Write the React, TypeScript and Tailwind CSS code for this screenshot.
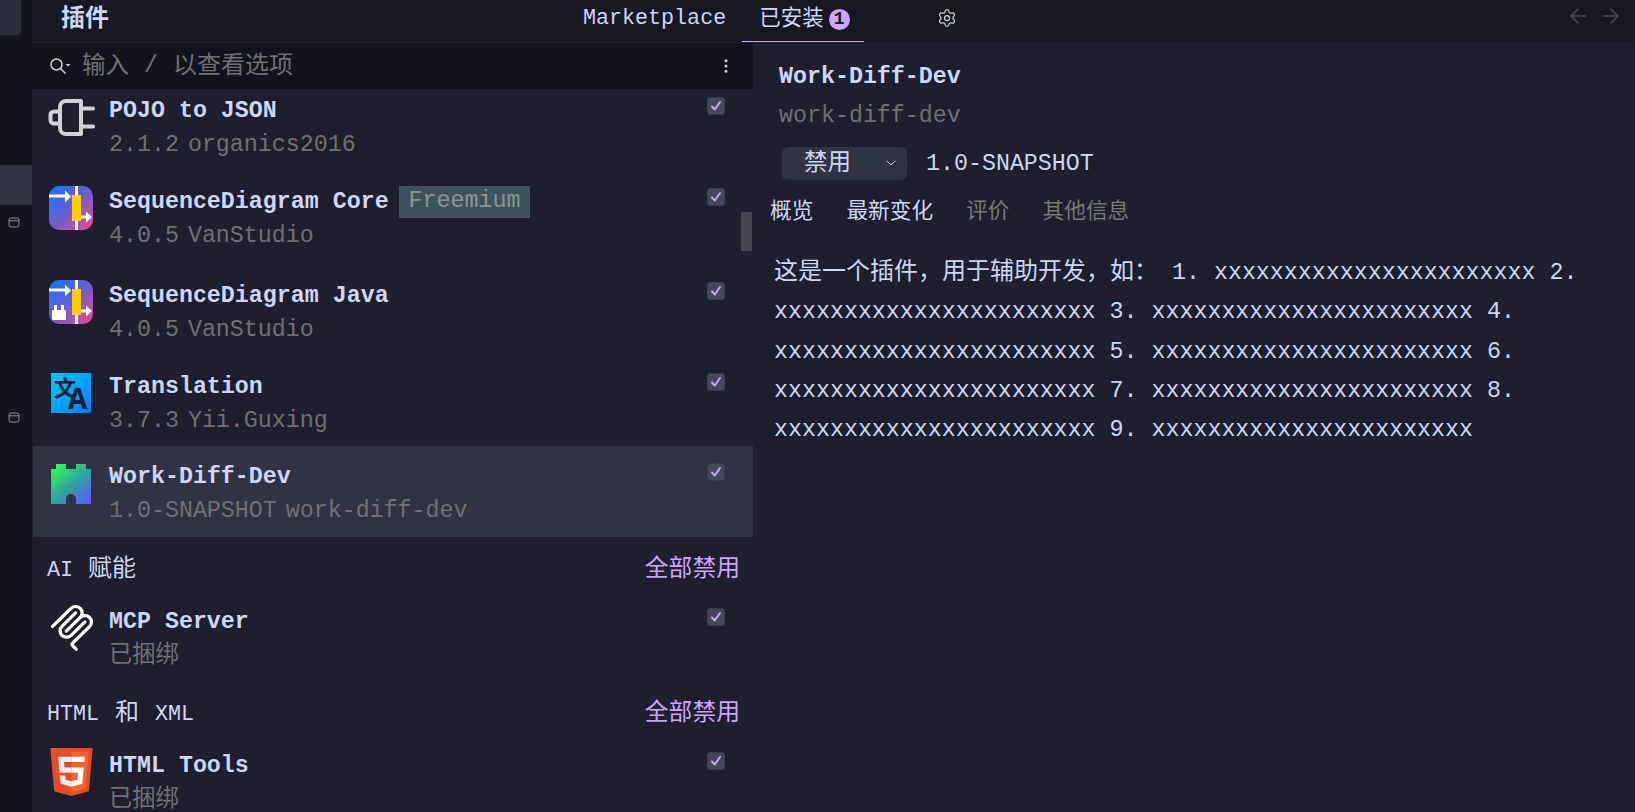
import { type FC, type ReactNode } from 'react'
import { ArrowLeft, ArrowRight, ChevronDown, EllipsisVertical, Settings } from 'lucide-react'

const xs = 'xxxxxxxxxxxxxxxxxxxxxxx'

const PlugIcon: FC<{ className?: string }> = ({ className }) => (
  <svg className={className} width="47" height="37" viewBox="0 0 47 37" fill="none" stroke="#d2d2d4" strokeWidth="4" strokeLinecap="round" strokeLinejoin="round">
    <path d="M33 2H18a6 6 0 0 0-6 6v21a6 6 0 0 0 6 6h15z" />
    <path d="M12 12.500H6a3.500 3.500 0 0 0-3.500 3.500v5A3.500 3.500 0 0 0 6 24.500h6" />
    <path d="M33 9.500h12M33 27.500h12" />
  </svg>
)

const SeqIcon: FC<{ id: string; plug?: boolean; className?: string }> = ({ id, plug, className }) => (
  <svg className={className} width="44" height="44" viewBox="0 0 44 44">
    <defs>
      <linearGradient id={id} x1="0" y1="0" x2="1" y2="1">
        <stop offset="0" stopColor="#0d74ff" />
        <stop offset="0.5" stopColor="#6b5fd0" />
        <stop offset="1" stopColor="#f0458c" />
      </linearGradient>
    </defs>
    <rect width="44" height="44" rx="10" fill={`url(#${id})`} />
    <rect x="26" y="0" width="3" height="44" fill="#fff" />
    <rect x="23" y="9" width="9" height="26" fill="#ffcc00" />
    <path d="M0 10h16" stroke="#fff" strokeWidth="3" />
    <path d="M16 4.500l6 6-6 6z" fill="#fff" />
    <path d="M32 31h6" stroke="#fff" strokeWidth="3" />
    <path d="M37 25.500l6 5.500-6 5.500z" fill="#fff" />
    {plug && (
      <g fill="#fff">
        <rect x="3" y="30" width="14" height="10" rx="1" />
        <rect x="5" y="25" width="3" height="6" />
        <rect x="12" y="25" width="3" height="6" />
      </g>
    )}
  </svg>
)

const TranslationIcon: FC<{ className?: string }> = ({ className }) => (
  <svg className={className} width="40" height="40" viewBox="0 0 40 40">
    <defs>
      <linearGradient id="tr" x1="0" y1="0" x2="1" y2="1">
        <stop offset="0" stopColor="#00c8ff" />
        <stop offset="1" stopColor="#0a7cff" />
      </linearGradient>
    </defs>
    <rect width="40" height="40" fill="url(#tr)" />
    <text x="3" y="23" fontSize="22" fontWeight="700" fill="#1e2030" fontFamily="'Noto Sans CJK SC', sans-serif">文</text>
    <text x="17" y="36" fontSize="28" fontWeight="700" fill="#1e2030" fontFamily="'Noto Sans', sans-serif">A</text>
  </svg>
)

const CastleIcon: FC<{ className?: string }> = ({ className }) => (
  <svg className={className} width="40" height="40" viewBox="0 0 40 40">
    <defs>
      <linearGradient id="castle" x1="0.1" y1="0.1" x2="0.9" y2="1">
        <stop offset="0" stopColor="#33f45a" />
        <stop offset="0.5" stopColor="#2ea3a0" />
        <stop offset="1" stopColor="#5f58ff" />
      </linearGradient>
    </defs>
    <path d="M0 5h5V0h10v5h10V0h10v5h5v35H25v-5a5 5 0 0 0-10 0v5H0z" fill="url(#castle)" />
  </svg>
)

const McpIcon: FC<{ className?: string }> = ({ className }) => (
  <svg className={className} width="46" height="48" viewBox="0 0 24 24" fill="#fff">
    <path d="M15.688 2.343a2.588 2.588 0 00-3.61 0l-9.626 9.44a.863.863 0 01-1.203 0 .823.823 0 010-1.18l9.626-9.44a4.313 4.313 0 016.016 0 4.116 4.116 0 011.204 3.54 4.3 4.3 0 013.609 1.18l.05.05a4.115 4.115 0 010 5.9l-8.706 8.537a.274.274 0 000 .393l1.788 1.754a.823.823 0 010 1.18.863.863 0 01-1.203 0l-1.788-1.753a1.92 1.92 0 010-2.754l8.706-8.538a2.47 2.47 0 000-3.54l-.05-.049a2.588 2.588 0 00-3.607-.003l-7.172 7.034-.002.002-.098.097a.863.863 0 01-1.204 0 .823.823 0 010-1.18l7.273-7.133a2.47 2.47 0 00-.003-3.537z" />
    <path d="M14.485 4.703a.823.823 0 000-1.18.863.863 0 00-1.204 0l-7.119 6.982a4.115 4.115 0 000 5.9 4.314 4.314 0 006.016 0l7.12-6.982a.823.823 0 000-1.18.863.863 0 00-1.204 0l-7.119 6.982a2.588 2.588 0 01-3.61 0 2.47 2.47 0 010-3.54l7.12-6.982z" />
  </svg>
)

const Html5Icon: FC<{ className?: string }> = ({ className }) => (
  <svg className={className} width="43" height="48" viewBox="30 0 452 512">
    <path d="M71 460L30 0h452l-41 460-185 52z" fill="#e44d26" />
    <path d="M256 472l149-41 35-394H256z" fill="#f16529" />
    <path d="M256 208h-74.400l-5.100-58H256V94H114.300l13.700 171h128zM256 355h-.3l-62.700-17-4-45h-56l7 89 115.700 32h.3z" fill="#ebebeb" />
    <path d="M255.800 208v57h69.900l-6.700 73-63.200 17v59L372 382l15-174zM255.800 94v56h136.800l4.900-56z" fill="#fff" />
  </svg>
)

const SearchIcon = () => (
  <svg width="22" height="18" viewBox="0 0 22 18" fill="none" stroke="#cdd0dc" strokeWidth="1.500">
    <circle cx="7.500" cy="7.500" r="5.500" />
    <path d="M11.500 11.500l5 5" />
    <path d="M16.500 7h5l-2.500 2.500z" fill="#cdd0dc" stroke="none" />
  </svg>
)

const RailIcon = () => (
  <svg width="12" height="11" viewBox="0 0 12 11" fill="none" stroke="#8b8d98" strokeWidth="1">
    <rect x="1" y="1" width="10" height="9" rx="2" />
    <path d="M1 3.800h10" />
  </svg>
)

const Checkbox = () => (
  <div className="mt-[3px] flex h-[18px] w-[18px] shrink-0 items-center justify-center rounded-[3px] border border-[#3a3b4d] bg-[#45475a]">
    <svg width="12" height="12" viewBox="0 0 12 12" fill="none" stroke="#cba6f7" strokeWidth="2" strokeLinecap="round" strokeLinejoin="round">
      <path d="M2 6.500l2.800 3L10 2" />
    </svg>
  </div>
)

type RowProps = {
  icon: ReactNode
  name: string
  version?: string
  author?: string
  bundled?: boolean
  badge?: string
  selected?: boolean
  className: string
}

const PluginRow: FC<RowProps> = ({ icon, name, version, author, bundled, badge, selected, className }) => (
  <div className={`flex items-start pr-[28px] pt-[14px] ${selected ? 'bg-[#313244]' : ''} ${className}`}>
    <div className="w-[76px] shrink-0">{icon}</div>
    <div className="min-w-0 flex-1 leading-[34px]">
      <div className="flex items-center">
        <span className="font-bold text-[#cdd6f4]">{name}</span>
        {badge && <span className="ml-[10px] h-[32px] bg-[#3e525c] px-[10px] leading-[31px] text-[#8d948f]">{badge}</span>}
      </div>
      {bundled ? (
        <div className="text-[23.300px] text-[#707070]">已捆绑</div>
      ) : (
        <div className="flex gap-[9px] text-[#707070]">
          <span>{version}</span>
          <span>{author}</span>
        </div>
      )}
    </div>
    <Checkbox />
  </div>
)

const SectionHeader: FC<{ title: ReactNode; className: string }> = ({ title, className }) => (
  <div className={`flex items-center justify-between pl-[14px] pr-[13px] pt-[11px] text-[#cdd6f4] ${className}`}>
    <span className="text-[21.700px]">{title}</span>
    <span className="text-[23.800px] text-[#cba6f7]">全部禁用</span>
  </div>
)

export default function App() {
  return (
    <div className="relative flex h-[812px] w-[1635px] overflow-hidden bg-[#1e1e2e] font-['Liberation_Mono','Noto_Sans_CJK_SC',monospace] text-[23.300px]">
      {/* tool window rail */}
      <div className="flex h-full w-[32px] shrink-0 flex-col bg-[#15151f]">
        <div className="h-[36px] w-[22px] rounded-br-[5px] border-r border-b border-[#1f1f2c] bg-[#2c2d3d]" />
        <div className="mt-[129px] h-[40px] bg-[#313244]" />
        <div className="mt-[12px] flex justify-center pr-[5px]"><RailIcon /></div>
        <div className="mt-[184px] flex justify-center pr-[5px]"><RailIcon /></div>
      </div>

      <div className="flex min-w-0 flex-1 flex-col">
        {/* header tabs */}
        <div className="flex h-[43px] shrink-0 items-start border-b border-[#1e1e2e] bg-[#181825]">
          <div className="ml-[29px] w-[522px] pt-[4px] text-[24px] font-bold leading-[32px] text-[#cdd6f4]">插件</div>
          <div className="pt-[3px] text-[21.700px] leading-[32px] text-[#cdd6f4]">Marketplace</div>
          <div className="ml-[16px] flex h-[42px] w-[122px] items-start gap-[5px] border-b border-[#cba6f7] pl-[17px] pt-[3px]">
            <span className="text-[21.500px] leading-[32px] text-[#cdd6f4]">已安装</span>
            <span className="mt-[6px] flex h-[21px] w-[21px] items-center justify-center rounded-full bg-[#cba6f7] text-[18px] font-bold text-[#181825]">1</span>
          </div>
          <Settings size={20} strokeWidth={1.500} className="ml-[73px] mt-[8px] text-[#cdd0dc]" />
          <div className="ml-auto mr-[12px] mt-[4px] flex gap-[9px] text-[#4c4c54]">
            <ArrowLeft size={24} strokeWidth={1.500} />
            <ArrowRight size={24} strokeWidth={1.500} />
          </div>
        </div>

        <div className="flex min-h-0 flex-1">
          {/* plugin list */}
          <div className="relative flex h-full w-[721px] shrink-0 flex-col">
            <div className="z-10 flex h-[46px] shrink-0 items-center bg-[#13131e] pl-[17px] pr-[18px]">
              <SearchIcon />
              <span className="ml-[11px] flex items-center pt-[1px] text-[#707070]">
                <span className="text-[23.500px]">输入</span>
                <span className="mx-[15px]">/</span>
                <span className="text-[24px]">以查看选项</span>
              </span>
              <EllipsisVertical size={18} strokeWidth={2} className="ml-auto text-[#cdd0dc]" />
            </div>
            <div className="-mt-[9px] pl-[1px]">
              <PluginRow className="h-[91px]" name="POJO to JSON" version="2.1.2" author="organics2016" icon={<PlugIcon className="ml-[15px] mt-[5px]" />} />
              <PluginRow className="h-[94px]" name="SequenceDiagram Core" version="4.0.5" author="VanStudio" badge="Freemium" icon={<SeqIcon id="seq1" className="ml-[16px] mt-[1px]" />} />
              <PluginRow className="h-[91px]" name="SequenceDiagram Java" version="4.0.5" author="VanStudio" icon={<SeqIcon id="seq2" plug className="ml-[16px] mt-[1px]" />} />
              <PluginRow className="h-[90px]" name="Translation" version="3.7.3" author="Yii.Guxing" icon={<TranslationIcon className="ml-[18px] mt-[3px]" />} />
              <PluginRow className="h-[91px]" selected name="Work-Diff-Dev" version="1.0-SNAPSHOT" author="work-diff-dev" icon={<CastleIcon className="ml-[18px] mt-[4px]" />} />
              <SectionHeader className="h-[54px]" title={<>AI <span className="ml-[2px] text-[24px]">赋能</span></>} />
              <PluginRow className="h-[91px]" name="MCP Server" bundled icon={<McpIcon className="ml-[16px] -mt-[1px]" />} />
              <SectionHeader className="h-[53px]" title={<>HTML <span className="mx-[3px] text-[24px]">和</span> XML</>} />
              <PluginRow className="h-[91px]" name="HTML Tools" bundled icon={<Html5Icon className="ml-[17px] -mt-[1px]" />} />
            </div>
            <div className="absolute left-[709px] top-[169px] h-[39px] w-[11px] bg-[#45454f]" />
          </div>

          {/* plugin details */}
          <div className="min-w-0 flex-1 pl-[26px] pr-[40px]">
            <div className="pt-[17px] font-bold leading-[34px] text-[#cdd6f4]">Work-Diff-Dev</div>
            <div className="mt-[5px] leading-[34px] text-[#707070]">work-diff-dev</div>
            <div className="mt-[14px] flex items-center">
              <div className="ml-[3px] flex h-[34px] w-[125px] items-center justify-between rounded-[6px] border-b-2 border-[#25263a] bg-[#313244] pl-[22px] pr-[8px]">
                <span className="text-[23.500px] leading-none text-[#cdd6f4]">禁用</span>
                <ChevronDown size={16} strokeWidth={1.500} className="text-[#cdd0dc]" />
              </div>
              <span className="ml-[19px] text-[#cdd6f4]">1.0-SNAPSHOT</span>
            </div>
            <div className="-ml-[9px] mt-[15px] flex gap-[33px] text-[21.700px] leading-[32px]">
              <span className="text-[#cdd6f4]">概览</span>
              <span className="text-[#cdd6f4]">最新变化</span>
              <span className="text-[#787878]">评价</span>
              <span className="text-[#787878]">其他信息</span>
            </div>
            <p className="-ml-[5px] mt-[24px] leading-[39.300px] text-[#cdd6f4]">
              <span className="text-[24px]">这是一个插件，用于辅助开发，如：</span> 1. {xs} 2. {xs} 3. {xs} 4. {xs} 5. {xs} 6. {xs} 7. {xs} 8. {xs} 9. {xs}
            </p>
          </div>
        </div>
      </div>
    </div>
  )
}
